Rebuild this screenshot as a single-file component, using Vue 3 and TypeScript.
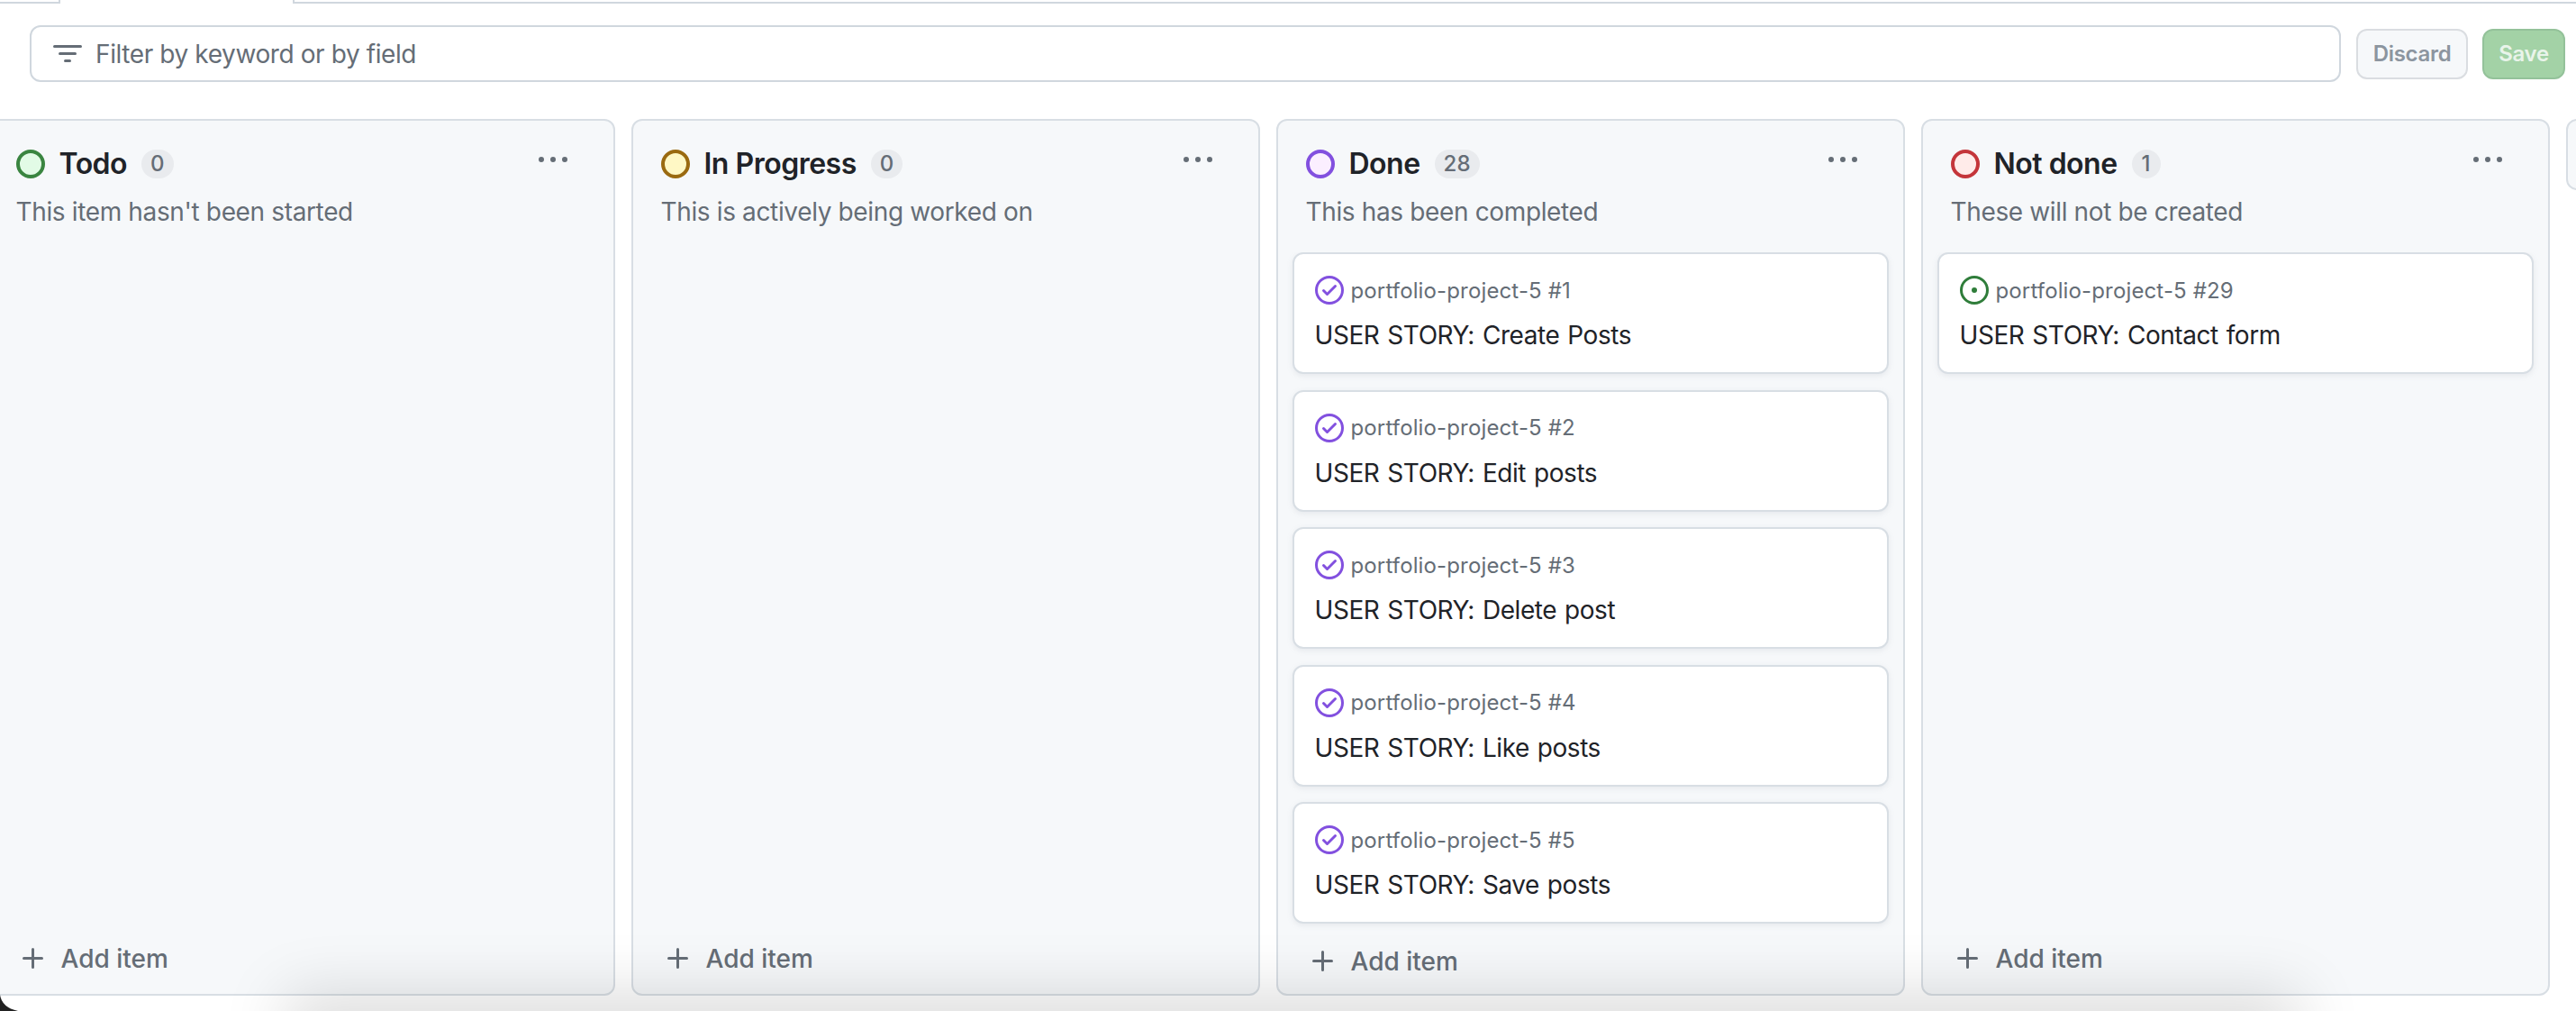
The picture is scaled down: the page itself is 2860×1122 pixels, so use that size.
<script setup lang="ts">
interface Card {
  id: number;
  title: string;
  state: "closed" | "open";
}

interface Column {
  name: string;
  desc: string;
  count: number;
  tone: string;
  cards: Card[];
}

const columns: Column[] = [
  { name: "Todo", desc: "This item hasn't been started", count: 0, tone: "green", cards: [] },
  { name: "In Progress", desc: "This is actively being worked on", count: 0, tone: "yellow", cards: [] },
  {
    name: "Done",
    desc: "This has been completed",
    count: 28,
    tone: "purple",
    cards: [
      { id: 1, title: "USER STORY: Create Posts", state: "closed" },
      { id: 2, title: "USER STORY: Edit posts", state: "closed" },
      { id: 3, title: "USER STORY: Delete post", state: "closed" },
      { id: 4, title: "USER STORY: Like posts", state: "closed" },
      { id: 5, title: "USER STORY: Save posts", state: "closed" },
    ],
  },
  {
    name: "Not done",
    desc: "These will not be created",
    count: 1,
    tone: "red",
    cards: [{ id: 29, title: "USER STORY: Contact form", state: "open" }],
  },
];
</script>

<template>
  <div class="page">
    <div class="tabs">
      <div class="tab-line tab-left"></div>
      <div class="tab-active"></div>
      <div class="tab-line tab-right"></div>
    </div>

    <div class="filter-row">
      <div class="filter">
        <svg class="filter-icon" viewBox="0 0 16 16" width="32" height="32">
          <path d="M.75 3h14.5a.75.75 0 0 1 0 1.5H.75a.75.75 0 0 1 0-1.5ZM3 7.75A.75.75 0 0 1 3.75 7h8.5a.75.75 0 0 1 0 1.5h-8.5A.75.75 0 0 1 3 7.75Zm3 4a.75.75 0 0 1 .75-.75h2.5a.75.75 0 0 1 0 1.5h-2.5a.75.75 0 0 1-.75-.75Z" />
        </svg>
        <span>Filter by keyword or by field</span>
      </div>
      <button class="btn discard">Discard</button>
      <button class="btn save">Save</button>
    </div>

    <div class="board">
      <section v-for="col in columns" :key="col.name" class="column">
        <header class="col-head">
          <svg class="status" :class="col.tone" viewBox="0 0 32 32" width="32" height="32">
            <circle cx="16" cy="16" r="14" />
          </svg>
          <h2 class="col-name">{{ col.name }}</h2>
          <span class="count">{{ col.count }}</span>
          <svg class="kebab" viewBox="0 0 16 16" width="32" height="32">
            <path d="M8 9a1.5 1.5 0 1 0 0-3 1.5 1.5 0 0 0 0 3ZM1.5 9a1.5 1.5 0 1 0 0-3 1.5 1.5 0 0 0 0 3Zm13 0a1.5 1.5 0 1 0 0-3 1.5 1.5 0 0 0 0 3Z" />
          </svg>
        </header>
        <p class="col-desc">{{ col.desc }}</p>

        <div class="cards">
          <article v-for="card in col.cards" :key="card.id" class="card">
            <div class="card-meta">
              <svg v-if="card.state === 'closed'" class="state closed" viewBox="0 0 16 16" width="32" height="32">
                <path d="M0 8a8 8 0 1 1 16 0A8 8 0 0 1 0 8Zm1.5 0a6.5 6.5 0 1 0 13 0 6.5 6.5 0 0 0-13 0Zm10.28-1.72-4.5 4.5a.75.75 0 0 1-1.06 0l-2-2a.751.751 0 0 1 .018-1.042.751.751 0 0 1 1.042-.018l1.47 1.47 3.97-3.97a.751.751 0 0 1 1.042.018.751.751 0 0 1 .018 1.042Z" />
              </svg>
              <svg v-else class="state open" viewBox="0 0 16 16" width="32" height="32">
                <path d="M8 9.5a1.5 1.5 0 1 0 0-3 1.5 1.5 0 0 0 0 3Z" />
                <path d="M8 0a8 8 0 1 1 0 16A8 8 0 0 1 8 0ZM1.5 8a6.5 6.5 0 1 0 13 0 6.5 6.5 0 0 0-13 0Z" />
              </svg>
              <span>portfolio-project-5 #{{ card.id }}</span>
            </div>
            <div class="card-title">{{ card.title }}</div>
          </article>
        </div>

        <div class="add-item" :class="{ raised: col.cards.length > 1 }">
          <svg viewBox="0 0 16 16" width="32" height="32">
            <path d="M7.75 2a.75.75 0 0 1 .75.75V7h4.25a.75.75 0 0 1 0 1.5H8.5v4.25a.75.75 0 0 1-1.5 0V8.5H2.75a.75.75 0 0 1 0-1.5H7V2.75A.75.75 0 0 1 7.75 2Z" />
          </svg>
          <span>Add item</span>
        </div>
      </section>
      <div class="add-column"></div>
    </div>

    <!-- window shadow and desktop corner from the original capture -->
    <div class="window-shadow"></div>
    <svg class="corner" viewBox="0 0 20 18" width="20" height="18">
      <path d="M0 0Q2 14 20 18L0 18Z" />
    </svg>
  </div>
</template>

<style scoped>
.page {
  position: relative;
  width: 2860px;
  height: 1122px;
  overflow: hidden;
  background: #fff;
  font-family: Inter, "Liberation Sans", sans-serif;
  color: #1f2328;
}

.tabs {
  display: flex;
  height: 4px;
}
.tab-line {
  border-bottom: 2px solid #d0d7de;
}
.tab-left {
  width: 65px;
  border-right: 2px solid #d0d7de;
}
.tab-active {
  width: 258px;
}
.tab-right {
  flex: 1;
  border-left: 2px solid #d0d7de;
}

.filter-row {
  display: flex;
  align-items: center;
  margin-top: 24px;
  padding: 0 12px 0 33px;
}
.filter {
  flex: 1;
  height: 63px;
  display: flex;
  align-items: center;
  gap: 15px;
  padding-left: 24px;
  box-sizing: border-box;
  border: 2px solid #d0d7de;
  border-radius: 12px;
  color: #656d76;
  font-size: 28px;
  letter-spacing: -0.4px;
}
.filter-icon {
  fill: #656d76;
}
.btn {
  height: 56px;
  box-sizing: border-box;
  border-radius: 12px;
  font-family: inherit;
  font-size: 24px;
  font-weight: 600;
  letter-spacing: -0.3px;
  padding: 0;
}
.discard {
  width: 124px;
  margin-left: 17px;
  background: #f6f8fa;
  border: 2px solid #dadde1;
  color: #8c959f;
}
.save {
  width: 92px;
  margin-left: 16px;
  background: #a3d2a6;
  border: 2px solid #94c29a;
  color: #e9f4ea;
}

.board {
  display: flex;
  gap: 18px;
  height: 973px;
  margin-top: 41px;
  margin-left: -15.5px;
}
.column {
  flex: 0 0 698px;
  box-sizing: border-box;
  display: flex;
  flex-direction: column;
  background: #f6f8fa;
  border: 2px solid #d8dee4;
  border-radius: 12px;
}
.col-head {
  display: flex;
  align-items: center;
  height: 32px;
  margin-top: 32px;
  padding: 0 51px 0 31px;
}
.status {
  stroke-width: 4;
  flex: none;
}
.status.green {
  stroke: #3a8540;
  fill: #e2fbe6;
}
.status.yellow {
  stroke: #9a6a10;
  fill: #fff8c5;
}
.status.purple {
  stroke: #8250df;
  fill: #fbefff;
}
.status.red {
  stroke: #c4353a;
  fill: #ffebe9;
}
.col-name {
  margin: 0 0 0 16px;
  font-size: 32px;
  font-weight: 600;
  line-height: 32px;
  letter-spacing: -0.5px;
}
.count {
  min-width: 32px;
  height: 32px;
  box-sizing: border-box;
  margin-left: 16px;
  padding: 0 10px;
  border-radius: 16px;
  background: #e9ebee;
  color: #656d76;
  font-size: 24px;
  font-weight: 500;
  line-height: 32px;
  text-align: center;
}
.kebab {
  margin-left: auto;
  margin-top: -8px;
  fill: #656d76;
}
.col-desc {
  margin: 17px 0 0;
  padding-left: 31px;
  color: #656d76;
  font-size: 28px;
  line-height: 40px;
  letter-spacing: -0.36px;
}

.cards {
  flex: 1;
  display: flex;
  flex-direction: column;
  gap: 17.6px;
  margin-top: 25px;
  padding: 0 16px;
  overflow: hidden;
}
.card {
  flex: none;
  height: 135px;
  box-sizing: border-box;
  padding: 24px 23px 21px;
  background: #fff;
  border: 2px solid #d8dee4;
  border-radius: 12px;
  box-shadow: 0 2px 6px rgba(140, 149, 159, 0.15);
}
.card-meta {
  display: flex;
  align-items: center;
  gap: 8px;
  height: 32px;
  color: #656d76;
  font-size: 24px;
  letter-spacing: 0.14px;
}
.state.closed {
  fill: #8250df;
}
.state.open {
  fill: #2f7d3a;
}
.card-title {
  margin-top: 14px;
  font-size: 28px;
  line-height: 40px;
  letter-spacing: -0.44px;
  word-spacing: 1.5px;
}

.add-item {
  display: flex;
  align-items: center;
  gap: 15px;
  height: 32px;
  padding: 0 0 23px 34px;
  color: #656d76;
  font-size: 28px;
  font-weight: 500;
}
.add-item svg {
  fill: #656d76;
}
.add-item.raised {
  padding-top: 4px;
  padding-bottom: 20px;
}

.add-column {
  flex: 0 0 60px;
  height: 79px;
  box-sizing: border-box;
  background: #f6f8fa;
  border: 2px solid #d8dee4;
  border-radius: 12px;
}

.window-shadow {
  position: absolute;
  left: 335px;
  right: 325px;
  bottom: -40px;
  height: 40px;
  box-shadow: 0 0 70px 18px rgba(0, 0, 0, 0.15);
  pointer-events: none;
}
.corner {
  position: absolute;
  left: 0;
  bottom: 0;
  fill: #222;
}
</style>

<style>
html,
body {
  margin: 0;
  background: #fff;
  overflow: hidden;
}
</style>
